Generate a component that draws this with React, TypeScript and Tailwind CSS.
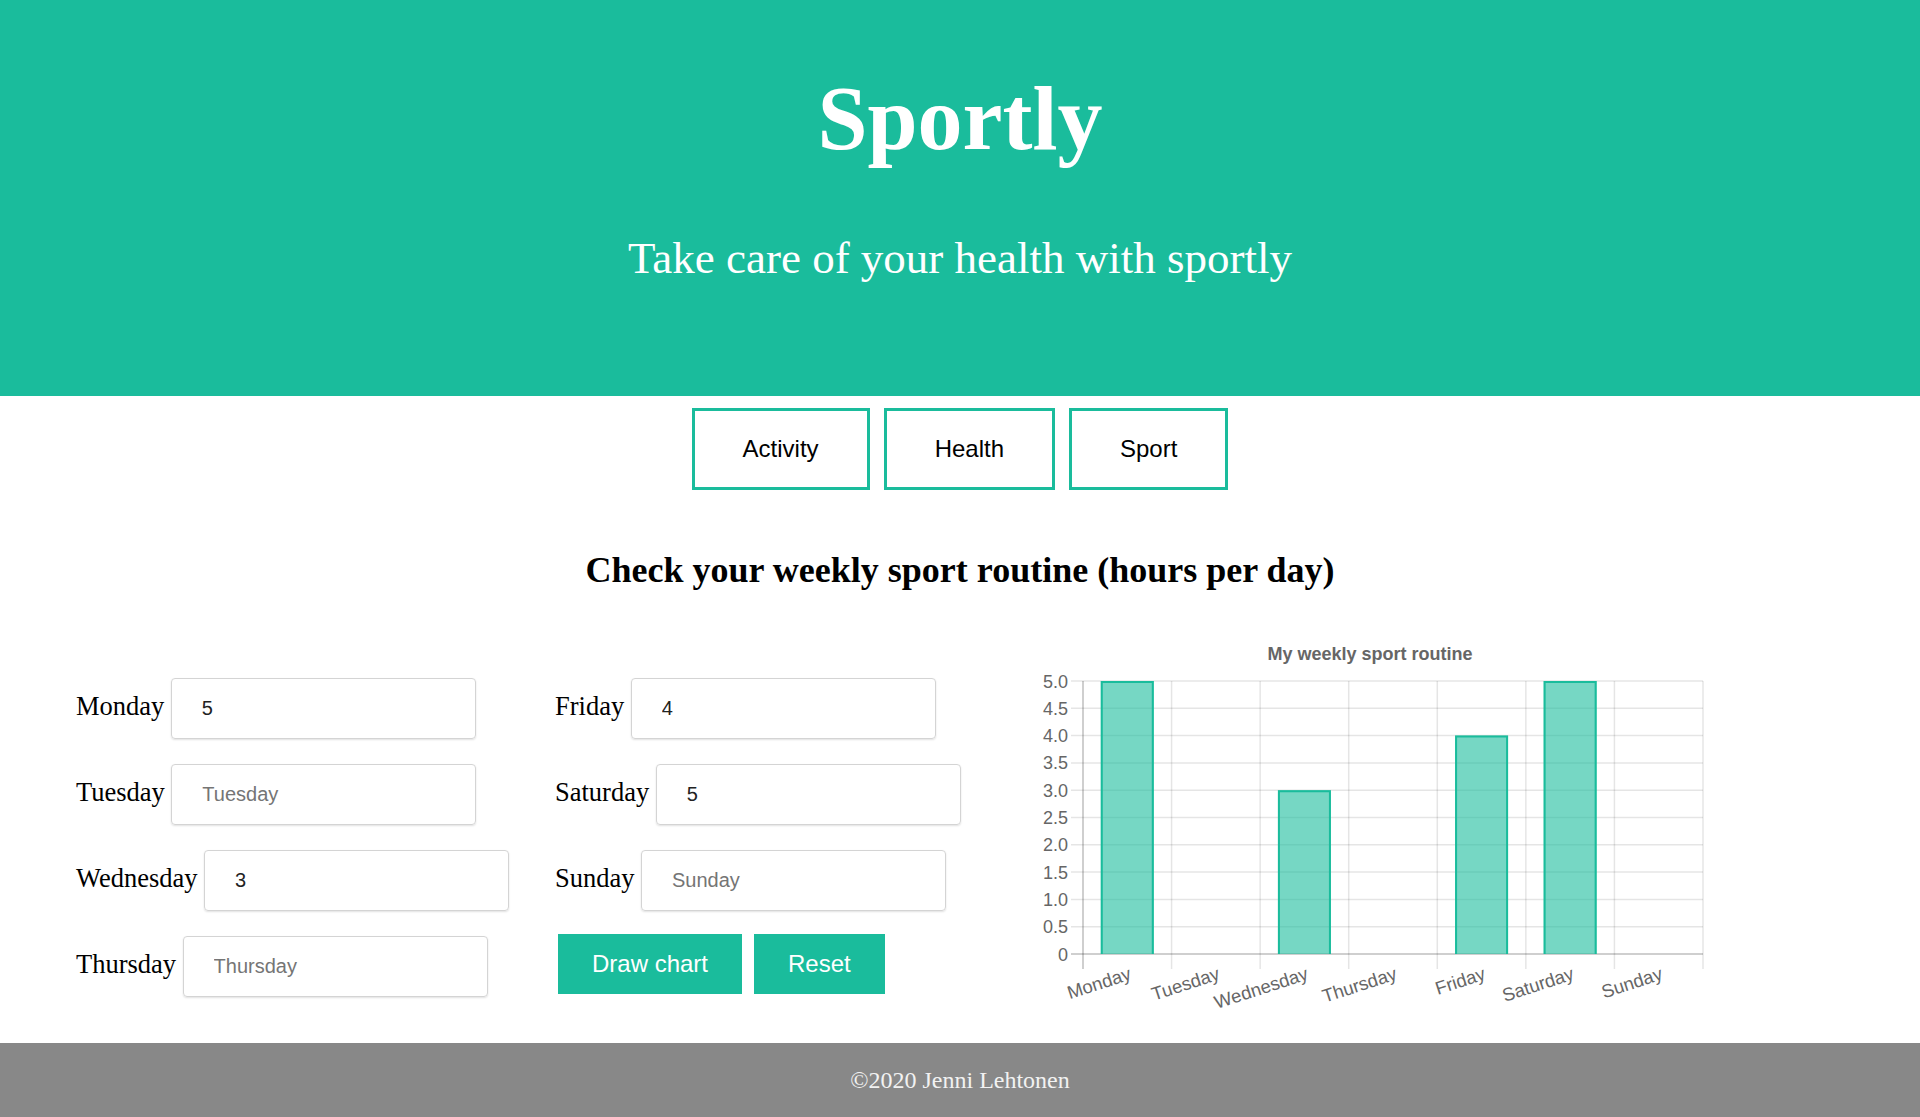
import React from 'react';

const TEAL = '#1abc9c';
const DAYS = ['Monday', 'Tuesday', 'Wednesday', 'Thursday', 'Friday', 'Saturday', 'Sunday'];
const HOURS = [5, 0, 3, 0, 4, 5, 0];

const serif = { fontFamily: '"Liberation Serif", "Times New Roman", serif' };
const sans = { fontFamily: '"Liberation Sans", Arial, sans-serif' };

function DayInput({ day, value }: { day: string; value?: string }) {
  return (
    <div className="flex items-baseline gap-[6.5px]">
      <label className="text-[26.5px] text-black" style={serif}>
        {day}
      </label>
      <input
        defaultValue={value}
        placeholder={day}
        className="w-[305px] h-[61px] px-[30px] text-[20px] text-[#222] placeholder:text-[#757575] border border-[#d4d4d4] rounded-[4px] shadow-[0_1px_2px_rgba(0,0,0,0.12)] outline-none"
        style={sans}
      />
    </div>
  );
}

function WeekChart() {
  const L = 63;
  const R = 683;
  const T = 50;
  const B = 323;
  const step = (B - T) / 10;
  const cw = (R - L) / 7;
  const barW = 53;

  return (
    <svg width="700" height="390" viewBox="0 0 700 390" style={sans}>
      <text x="350" y="29" textAnchor="middle" fontSize="18" fontWeight="700" fill="#666">
        My weekly sport routine
      </text>

      {/* horizontal grid + y labels */}
      {Array.from({ length: 11 }).map((_, i) => {
        const y = B - i * step;
        return (
          <g key={`h${i}`}>
            <line
              x1={51}
              x2={R}
              y1={y}
              y2={y}
              stroke={i === 0 ? 'rgba(0,0,0,0.25)' : 'rgba(0,0,0,0.1)'}
              strokeWidth="1.5"
            />
            <text x="48" y={y + 6.5} textAnchor="end" fontSize="18" fill="#666">
              {i === 0 ? '0' : (i / 2).toFixed(1)}
            </text>
          </g>
        );
      })}

      {/* vertical grid */}
      {Array.from({ length: 8 }).map((_, j) => {
        const x = L + j * cw;
        return (
          <line
            key={`v${j}`}
            x1={x}
            x2={x}
            y1={T}
            y2={B + 15}
            stroke={j === 0 ? 'rgba(0,0,0,0.25)' : 'rgba(0,0,0,0.1)'}
            strokeWidth="1.5"
          />
        );
      })}

      {/* bars */}
      {HOURS.map((v, i) => {
        if (!v) return null;
        const cx = L + (i + 0.5) * cw;
        const x0 = cx - barW / 2;
        const y0 = B - v * 2 * step;
        return (
          <g key={`b${i}`}>
            <rect x={x0} y={y0} width={barW} height={B - y0} fill="rgba(26,188,156,0.6)" />
            <path
              d={`M${x0 + 1} ${B} V${y0 + 1} H${x0 + barW - 1} V${B}`}
              fill="none"
              stroke={TEAL}
              strokeWidth="2"
            />
          </g>
        );
      })}

      {/* x labels */}
      {DAYS.map((d, i) => {
        const ax = L + (i + 0.5) * cw + 5;
        const ay = B + 25;
        return (
          <text
            key={d}
            x={ax}
            y={ay}
            textAnchor="end"
            fontSize="18.5"
            fill="#666"
            transform={`rotate(-18 ${ax} ${ay})`}
          >
            {d}
          </text>
        );
      })}
    </svg>
  );
}

export default function App() {
  return (
    <div className="min-h-screen flex flex-col bg-white">
      <header className="h-[396px] bg-[#1abc9c] flex flex-col items-center text-white" style={serif}>
        <h1 className="mt-[74px] text-[90px] leading-none font-bold">Sportly</h1>
        <p className="mt-[72px] text-[45px] leading-none">Take care of your health with sportly</p>
      </header>

      <nav className="mt-[12px] flex justify-center gap-[14px]" style={sans}>
        {['Activity', 'Health', 'Sport'].map((item) => (
          <button
            key={item}
            className="border-[3px] border-[#1abc9c] px-[48px] py-[24px] text-[24px] leading-[27.6px] text-black bg-white"
          >
            {item}
          </button>
        ))}
      </nav>

      <main className="flex-1 flex flex-col">
        <h2 className="mt-[62px] text-center text-[36px] leading-none font-bold text-black" style={serif}>
          Check your weekly sport routine (hours per day)
        </h2>

        <section className="mt-[43px] flex pl-[76px]">
          <div className="w-[479px] mt-[47px] flex flex-col gap-[25px]">
            <DayInput day="Monday" value="5" />
            <DayInput day="Tuesday" />
            <DayInput day="Wednesday" value="3" />
            <DayInput day="Thursday" />
          </div>
          <div className="w-[465px] mt-[47px] flex flex-col gap-[25px]">
            <DayInput day="Friday" value="4" />
            <DayInput day="Saturday" value="5" />
            <DayInput day="Sunday" />
            <div className="flex gap-[12px] ml-[3px] -mt-[2px]" style={sans}>
              <button className="h-[60px] px-[34px] bg-[#1abc9c] text-white text-[24px]">Draw chart</button>
              <button className="h-[60px] px-[34px] bg-[#1abc9c] text-white text-[24px]">Reset</button>
            </div>
          </div>
          <WeekChart />
        </section>
      </main>

      <footer className="h-[74px] bg-[#888888] flex items-center justify-center text-[24px] text-[#f2f2f2]" style={serif}>
        ©2020 Jenni Lehtonen
      </footer>
    </div>
  );
}
